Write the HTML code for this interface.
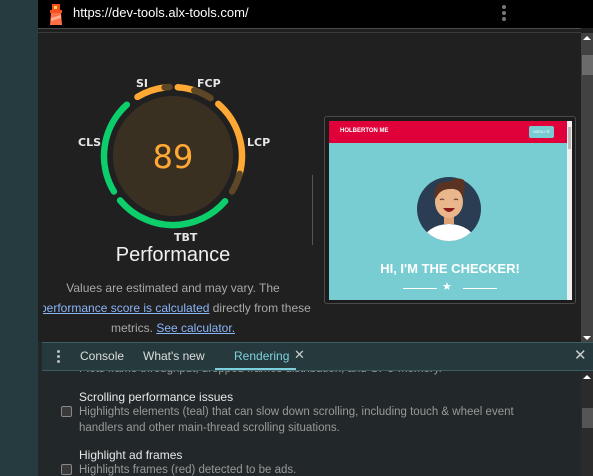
<!DOCTYPE html>
<html><head><meta charset="utf-8"><style>
*{margin:0;padding:0;box-sizing:border-box}
body{width:593px;height:476px;overflow:hidden;background:#202020;font-family:"Liberation Sans",sans-serif;position:relative}
.abs{position:absolute}
.lbl{position:absolute;font-family:"DejaVu Sans",sans-serif;font-size:11px;color:#e6e6e6;font-weight:bold}
.t{position:absolute;white-space:nowrap}
a{color:#8ab4f8;text-decoration:underline}
</style></head><body>
<div class="abs" style="left:0;top:0;width:38px;height:476px;background:#263b40"></div>
<div class="abs" style="left:38px;top:0;width:555px;height:28px;background:#000"></div>
<div class="abs" style="left:38px;top:28px;width:543px;height:1px;background:#4a4a4a"></div>
<div class="abs" style="left:38px;top:32px;width:543px;height:1px;background:#3a3a3a"></div>
<svg class="abs" style="left:48px;top:2px" width="16" height="24" viewBox="0 0 16 24">
<rect x="4" y="2" width="8" height="6" fill="#f4511e"/><rect x="6" y="4" width="3" height="3" fill="#ffd54f"/>
<rect x="2" y="8" width="12" height="3" fill="#f4511e"/>
<polygon points="3,11 13,11 14,23 2,23" fill="#ff7043"/>
<polygon points="3,16 13,13 13,16 3,19" fill="#ffab91"/>
</svg>
<div class="t" style="left:73px;top:5px;color:#fff;font-size:13px">https://dev-tools.alx-tools.com/</div>
<div class="abs" style="left:502px;top:5px;width:4px;height:4px;border-radius:50%;background:#777;box-shadow:0 6px 0 #777,0 12px 0 #777"></div>
<div class="abs" style="left:581px;top:33px;width:12px;height:310px;background:#424242"></div>
<div class="abs" style="left:582px;top:55px;width:11px;height:20px;background:#6b6b6b"></div>
<div class="abs" style="left:583px;top:36px;width:0;height:0;border-left:4px solid transparent;border-right:4px solid transparent;border-bottom:4px solid #fff"></div>
<div class="abs" style="left:583px;top:336px;width:0;height:0;border-left:4px solid transparent;border-right:4px solid transparent;border-top:4px solid #fff"></div>
<svg class="abs" style="left:0;top:0" width="330" height="260">
<circle cx="173" cy="156" r="60" fill="#3a3022"/>
<g>
<script>
var cx=173,cy=156,r=69;
function arc(a,b,c){var p=function(t){t=t*Math.PI/180;return (cx+r*Math.sin(t)).toFixed(1)+','+(cy-r*Math.cos(t)).toFixed(1)};
var large=(b-a)>180?1:0;var e=document.createElementNS('http://www.w3.org/2000/svg','path');
e.setAttribute('d','M'+p(a)+' A'+r+','+r+' 0 '+large+' 1 '+p(b));e.setAttribute('stroke',c);e.setAttribute('stroke-width','6.5');e.setAttribute('fill','none');e.setAttribute('stroke-linecap','round');document.currentScript.parentNode.appendChild(e);}
var G='#0cce6b',O='#ffa934',D='#5e4726';
arc(239,318,G);arc(329,353,O);arc(353,357,D);arc(4,18,O);arc(18,33,D);arc(41,105,O);arc(105,121,D);arc(131,230,G);
</script>
</g>
<text x="173" y="168" text-anchor="middle" font-family="DejaVu Sans,sans-serif" font-size="32" fill="#ffa934">89</text>
</svg>
<div class="lbl" style="left:136px;top:77px">SI</div>
<div class="lbl" style="left:197px;top:77px">FCP</div>
<div class="lbl" style="left:78px;top:136px">CLS</div>
<div class="lbl" style="left:247px;top:136px">LCP</div>
<div class="lbl" style="left:174px;top:231px">TBT</div>
<div class="t" style="left:173px;top:244px;transform:translateX(-50%);font-size:20px;color:#f0f0f0">Performance</div>
<div class="t" style="left:173px;top:281px;transform:translateX(-50%);font-size:12px;color:#a8a8a8">Values are estimated and may vary. The</div>
<div class="t" style="left:43px;top:301px;width:270px;overflow:hidden;font-size:12px;color:#a8a8a8"><span style="margin-left:-3px"><a>performance score is calculated</a> directly from these</span></div>
<div class="t" style="left:173px;top:321px;transform:translateX(-50%);font-size:12px;color:#a8a8a8">metrics. <a>See calculator.</a></div>
<div class="abs" style="left:312px;top:175px;width:1px;height:70px;background:#555"></div>
<div class="abs" style="left:324px;top:116px;width:252px;height:188px;border:1px solid #4a4a4a;border-radius:3px;background:#1c1c1c"></div>
<div class="abs" style="left:329px;top:121px;width:243px;height:179px;background:#78cdd3;overflow:hidden">
<div class="abs" style="left:0;top:0;width:238px;height:22px;background:#e0003a"></div>
<div class="t" style="left:11px;top:7px;font-size:6px;color:#fff;font-weight:bold">HOLBERTON ME</div>
<div class="abs" style="left:200px;top:5px;width:25px;height:12px;background:#78cdd3;border-radius:2px;font-size:4px;color:#fff;text-align:center;line-height:12px">MENU ☰</div>
<div class="abs" style="left:238px;top:0;width:5px;height:179px;background:#f0f0f0"></div>
<div class="abs" style="left:239px;top:6px;width:3px;height:22px;background:#bbb"></div>
<svg class="abs" style="left:87px;top:51px" width="66" height="70" viewBox="0 0 66 70">
<defs><clipPath id="c"><circle cx="33" cy="37" r="32"/></clipPath></defs>
<circle cx="33" cy="37" r="32" fill="#2a3d52"/>
<g clip-path="url(#c)"><ellipse cx="33" cy="70" rx="26" ry="18" fill="#fff"/></g>
<rect x="28" y="40" width="10" height="12" fill="#e0a378"/>
<ellipse cx="33" cy="30" rx="14" ry="16" fill="#eab68c"/>
<path d="M18 26 Q18 8 33 10 Q40 4 48 8 Q50 16 47 26 Q44 16 34 17 Q24 17 20 26Z" fill="#5a3322"/>
<path d="M27 36 Q33 44 39 36Z" fill="#8a1c1c"/>
<path d="M24 28 q2 -2 4 0 M38 28 q2 -2 4 0" stroke="#5a3322" fill="none"/>
</svg>
<div class="t" style="left:121px;top:140px;transform:translateX(-50%);font-size:13px;font-weight:bold;color:#fff">HI, I'M THE CHECKER!</div>
<div class="abs" style="left:74px;top:167px;width:34px;height:1px;background:#fff"></div>
<div class="abs" style="left:134px;top:167px;width:34px;height:1px;background:#fff"></div>
<div class="t" style="left:113px;top:159px;font-size:11px;color:#fff">★</div>
</div>
<div class="abs" style="left:38px;top:342px;width:555px;height:134px;background:#22272a"></div>
<div class="abs" style="left:42px;top:342px;width:551px;height:29px;background:#263a3e;border-top:1px solid #3e5d62;border-bottom:1px solid #3e5d62"></div>
<div class="abs" style="left:57px;top:350px;width:3px;height:3px;border-radius:50%;background:#bbb;box-shadow:0 5px 0 #bbb,0 10px 0 #bbb"></div>
<div class="t" style="left:80px;top:349px;font-size:12px;color:#ddd">Console</div>
<div class="t" style="left:143px;top:349px;font-size:12px;color:#ddd">What's new</div>
<div class="t" style="left:234px;top:349px;font-size:12px;color:#7cd0dc">Rendering</div>
<div class="t" style="left:294px;top:347px;font-size:13px;color:#ccc">✕</div>
<div class="abs" style="left:215px;top:368px;width:81px;height:2px;background:#7cd0dc"></div>
<div class="t" style="left:574px;top:346px;font-size:15px;color:#ccc">✕</div>
<div class="abs" style="left:42px;top:371px;width:539px;height:105px;overflow:hidden">
<div class="t" style="left:37px;top:-8px;font-size:11.5px;color:#999">Plots frame throughput, dropped frames distribution, and GPU memory.</div>
<div class="t" style="left:37px;top:19px;font-size:12px;color:#e8e8e8">Scrolling performance issues</div>
<div class="t" style="left:37px;top:35px;font-size:11.5px;color:#999">Highlights elements (teal) that can slow down scrolling, including touch &amp; wheel event</div>
<div class="t" style="left:37px;top:51px;font-size:11.5px;color:#999">handlers and other main-thread scrolling situations.</div>
<div class="abs" style="left:19px;top:35px;width:11px;height:11px;border:1px solid #888;border-radius:2px;background:#3a3a3a"></div>
<div class="t" style="left:37px;top:77px;font-size:12px;color:#e8e8e8">Highlight ad frames</div>
<div class="t" style="left:37px;top:93px;font-size:11.5px;color:#999">Highlights frames (red) detected to be ads.</div>
<div class="abs" style="left:19px;top:93px;width:11px;height:11px;border:1px solid #888;border-radius:2px;background:#3a3a3a"></div>
</div>
<div class="abs" style="left:581px;top:372px;width:12px;height:104px;background:#2b2b2b"></div>
<div class="abs" style="left:582px;top:408px;width:11px;height:20px;background:#555"></div>
<div class="abs" style="left:583px;top:375px;width:0;height:0;border-left:4px solid transparent;border-right:4px solid transparent;border-bottom:4px solid #fff"></div>
</body></html>
